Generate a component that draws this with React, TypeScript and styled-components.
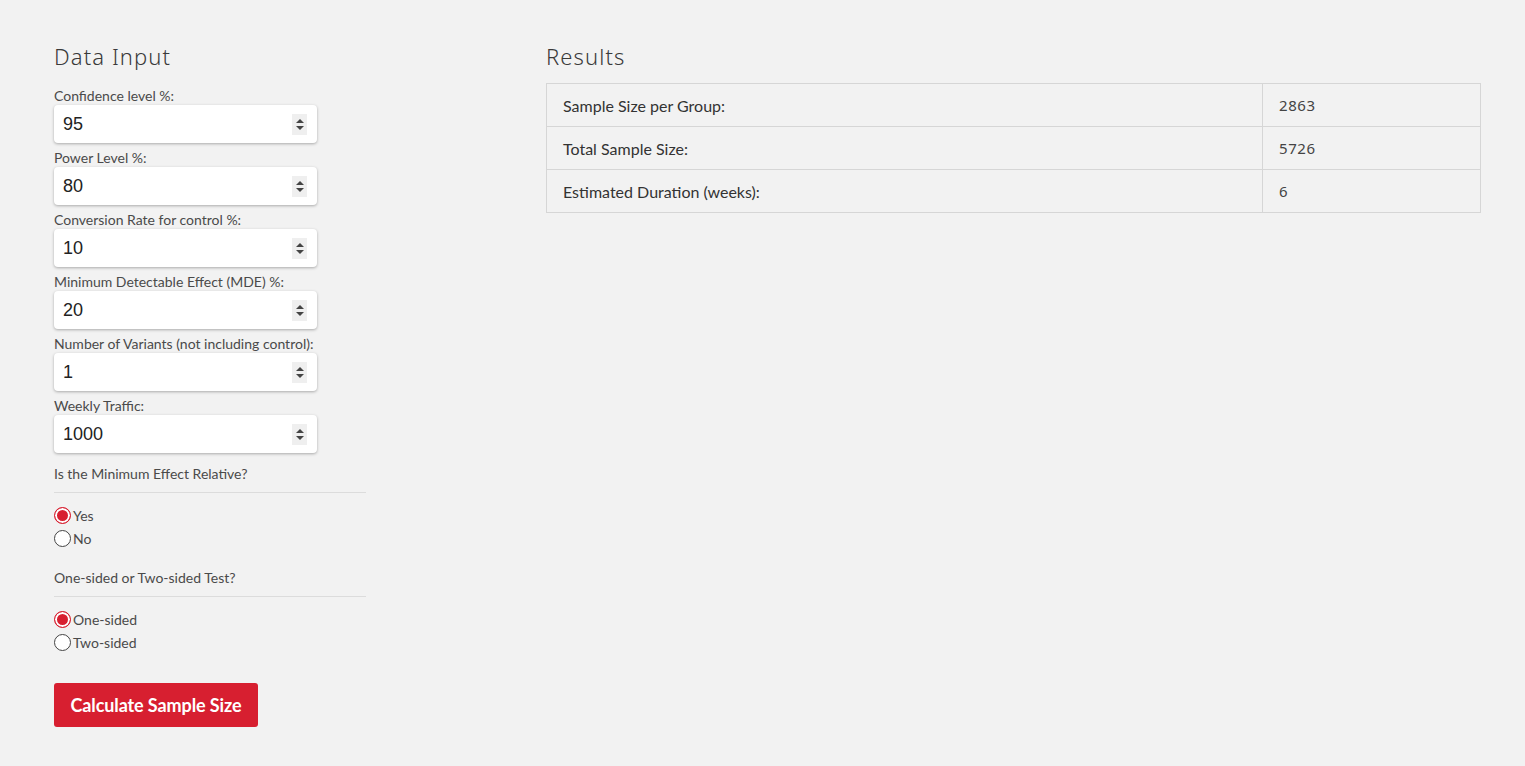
import styled, { createGlobalStyle } from 'styled-components'

const GlobalStyle = createGlobalStyle`
  html, body {
    margin: 0;
    padding: 0;
    background: #f2f2f2;
  }
  body {
    font-family: Lato, "Liberation Sans", sans-serif;
    color: #333;
  }
  * {
    box-sizing: border-box;
  }
`

const Page = styled.div`
  display: grid;
  grid-template-columns: 492px 935px;
  padding: 40px 0 40px 54px;
  min-height: 766px;
`

const Column = styled.div`
  display: flex;
  flex-direction: column;
`

const Heading = styled.h2<{ $gap: number }>`
  font-family: "Noto Sans", "Open Sans", sans-serif;
  font-weight: 300;
  font-size: 22px;
  letter-spacing: 1.1px;
  color: #3a3a3a;
  margin: -1px 0 ${p => p.$gap}px;
  line-height: 34px;
`

const Field = styled.div`
  display: flex;
  flex-direction: column;
  width: 263px;
  margin-bottom: 6px;
`

const FieldLabel = styled.label`
  font-size: 14px;
  line-height: 17px;
  color: #4a4a4a;
  margin-bottom: 1px;
`

const InputBox = styled.div`
  display: flex;
  align-items: center;
  height: 38px;
  width: 263px;
  border-radius: 4px;
  background: #fff;
  box-shadow: 0 1px 3px rgba(0, 0, 0, 0.3);
  padding: 0 10px 0 9px;
`

const NumberInput = styled.input`
  flex: 1;
  min-width: 0;
  border: none;
  background: transparent;
  font-family: "Liberation Sans", Arial, sans-serif;
  font-size: 18px;
  color: #222;
  padding: 0;
  outline: none;
  -moz-appearance: textfield;
  &::-webkit-inner-spin-button,
  &::-webkit-outer-spin-button {
    -webkit-appearance: none;
    margin: 0;
  }
`

const Spinner = styled.span`
  display: flex;
  flex-direction: column;
  align-items: center;
  justify-content: center;
  gap: 3px;
  width: 15px;
  height: 21px;
  background: #efefef;
  flex-shrink: 0;
`

const Arrow = styled.span<{ $down?: boolean }>`
  width: 0;
  height: 0;
  border-left: 4px solid transparent;
  border-right: 4px solid transparent;
  ${p =>
    p.$down ? 'border-top: 4px solid #444;' : 'border-bottom: 4px solid #444;'}
`

const Question = styled.div`
  font-size: 14px;
  color: #4a4a4a;
  width: 312px;
  padding: 6px 0 10px;
  border-bottom: 1px solid #dcdcdc;
  margin-bottom: 14px;
`

const RadioGroup = styled.div`
  display: flex;
  flex-direction: column;
  gap: 6px;
  margin-bottom: 16px;
`

const RadioRow = styled.label`
  display: flex;
  align-items: center;
  font-size: 14px;
  color: #4a4a4a;
  line-height: 17px;
`

const RadioMark = styled.span<{ $checked: boolean }>`
  width: 17px;
  height: 17px;
  border-radius: 50%;
  background: ${p => (p.$checked ? '#d71f30' : '#fff')};
  border: 1.5px solid ${p => (p.$checked ? '#d71f30' : '#444')};
  box-shadow: ${p => (p.$checked ? 'inset 0 0 0 2px #fff' : 'none')};
  margin-right: 2px;
  flex-shrink: 0;
`

const CalcButton = styled.button`
  align-self: flex-start;
  margin-top: 16px;
  width: 204px;
  height: 44px;
  border: none;
  border-radius: 3px;
  background: #d71f30;
  color: #fff;
  font-family: Lato, sans-serif;
  font-weight: 700;
  font-size: 18px;
  letter-spacing: -0.1px;
  cursor: pointer;
`

const ResultsTable = styled.table`
  width: 935px;
  border-collapse: collapse;
`

const LabelCell = styled.td`
  border: 1px solid #d6d6d6;
  height: 43px;
  padding: 0 16px;
  font-size: 16px;
  color: #333;
`

const ValueCell = styled(LabelCell)`
  width: 218px;
  font-family: "Noto Sans", "Open Sans", sans-serif;
  font-size: 15px;
  letter-spacing: 0.6px;
  color: #444;
`

const fields = [
  { label: 'Confidence level %:', value: 95 },
  { label: 'Power Level %:', value: 80 },
  { label: 'Conversion Rate for control %:', value: 10 },
  { label: 'Minimum Detectable Effect (MDE) %:', value: 20 },
  { label: 'Number of Variants (not including control):', value: 1 },
  { label: 'Weekly Traffic:', value: 1000 },
]

const results = [
  { label: 'Sample Size per Group:', value: '2863' },
  { label: 'Total Sample Size:', value: '5726' },
  { label: 'Estimated Duration (weeks):', value: '6' },
]

function Radio({ label, checked }: { label: string; checked: boolean }) {
  return (
    <RadioRow>
      <RadioMark $checked={checked} />
      {label}
    </RadioRow>
  )
}

export default function App() {
  return (
    <>
      <GlobalStyle />
      <Page>
        <Column>
          <Heading $gap={14}>Data Input</Heading>
          {fields.map(f => (
            <Field key={f.label}>
              <FieldLabel>{f.label}</FieldLabel>
              <InputBox>
                <NumberInput type="number" defaultValue={f.value} />
                <Spinner>
                  <Arrow />
                  <Arrow $down />
                </Spinner>
              </InputBox>
            </Field>
          ))}
          <Question>Is the Minimum Effect Relative?</Question>
          <RadioGroup>
            <Radio label="Yes" checked />
            <Radio label="No" checked={false} />
          </RadioGroup>
          <Question>One-sided or Two-sided Test?</Question>
          <RadioGroup>
            <Radio label="One-sided" checked />
            <Radio label="Two-sided" checked={false} />
          </RadioGroup>
          <CalcButton>Calculate Sample Size</CalcButton>
        </Column>
        <Column>
          <Heading $gap={10}>Results</Heading>
          <ResultsTable>
            <tbody>
              {results.map(r => (
                <tr key={r.label}>
                  <LabelCell>{r.label}</LabelCell>
                  <ValueCell>{r.value}</ValueCell>
                </tr>
              ))}
            </tbody>
          </ResultsTable>
        </Column>
      </Page>
    </>
  )
}
